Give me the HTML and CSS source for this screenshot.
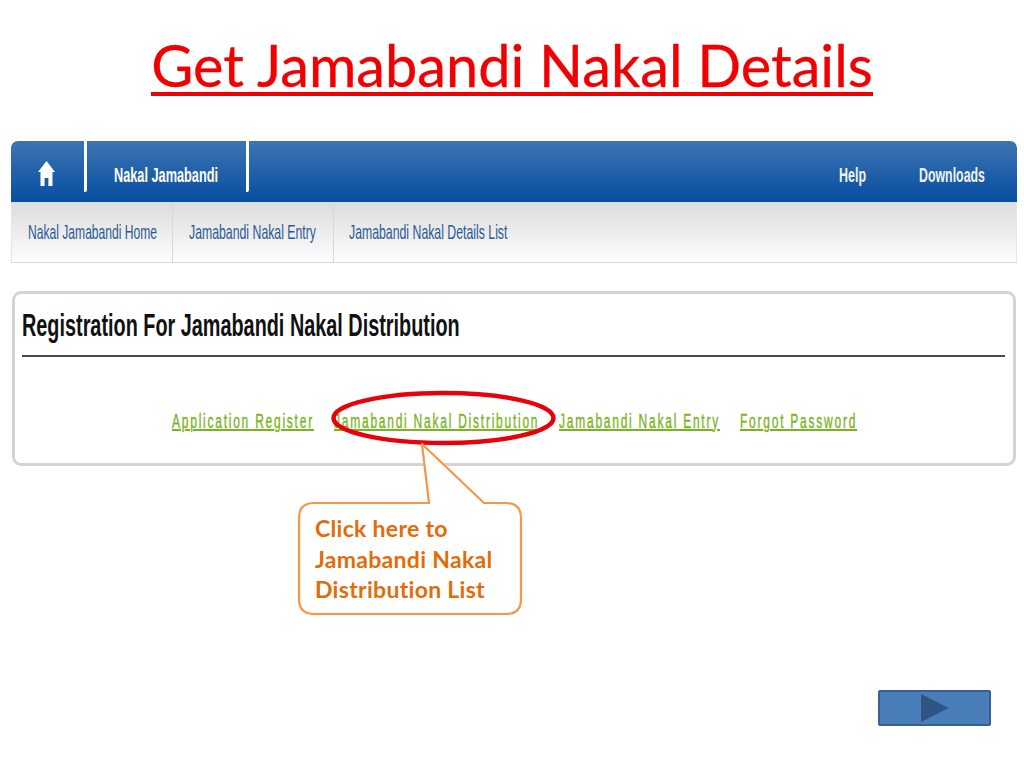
FILE: index.html
```html
<!DOCTYPE html>
<html lang="en">
<head>
<meta charset="utf-8">
<title>Get Jamabandi Nakal Details</title>
<link rel="stylesheet" href="styles.css">
</head>
<body>
<main class="slide">
  <h1 class="title"><span>Get Jamabandi Nakal Details</span></h1>
  <nav class="nav">
    <div class="mainbar">
      <a class="tab tab-home" aria-label="Home">
        <svg class="home" viewBox="0 0 17 25" width="17" height="25"><path d="M8.5 0 L17 11 L14.5 11 L14.5 25 L10.4 25 L10.4 17 L6.6 17 L6.6 25 L2.5 25 L2.5 11 L0 11 Z" fill="#fff"/></svg>
      </a>
      <a class="tab tab-nakal"><span class="sq">Nakal Jamabandi</span></a>
      <div class="spacer"></div>
      <a class="right help"><span class="sq">Help</span></a>
      <a class="right downloads"><span class="sq">Downloads</span></a>
    </div>
    <div class="subbar">
      <a class="sub sub1"><span class="sq">Nakal Jamabandi Home</span></a>
      <a class="sub sub2"><span class="sq">Jamabandi Nakal Entry</span></a>
      <a class="sub sub3"><span class="sq">Jamabandi Nakal Details List</span></a>
    </div>
  </nav>
  <section class="panel">
    <h2 class="panel-title"><span class="sq">Registration For Jamabandi Nakal Distribution</span></h2>
    <div class="links">
      <a class="l1"><span class="sq">Application Register</span></a>
      <a class="l2"><span class="sq">Jamabandi Nakal Distribution</span></a>
      <a class="l3"><span class="sq">Jamabandi Nakal Entry</span></a>
      <a class="l4"><span class="sq">Forgot Password</span></a>
    </div>
  </section>
  <svg class="annot" width="1024" height="768" viewBox="0 0 1024 768" aria-hidden="true">
    <ellipse cx="443.500" cy="418" rx="110" ry="25" fill="none" stroke="#e8000b" stroke-width="4.500"/>
    <path d="M422 444 L429 503 L314 503 Q299 503 299 518 L299 599 Q299 614 314 614 L506 614 Q521 614 521 599 L521 518 Q521 503 506 503 L484 503 Z" fill="#fff" stroke="#f79646" stroke-width="2.200" stroke-linejoin="round"/>
  </svg>
  <p class="callout">Click here to<br>Jamabandi Nakal<br>Distribution List</p>
  <div class="next"><div class="arrow"></div></div>
</main>
</body>
</html>
```
FILE: styles.css
```css
* { box-sizing: border-box; }
html, body { margin: 0; padding: 0; background: #fff; }
.slide { position: relative; width: 1024px; height: 768px; overflow: hidden; padding-top: 33px; }
.title { margin: 0; height: 108px; text-align: center; font: 400 57.7px/1 Lato, "Open Sans", sans-serif; color: #f00000; font-variant-ligatures: none; -webkit-text-stroke: .3px #f00000; }
.title span { display: inline-block; border-bottom: 4px solid #f00000; height: 63px; line-height: 64px; }
.sq { display: inline-block; white-space: nowrap; transform-origin: 0 50%; transform: scaleX(.6); }
.nav { margin: 0 7px 0 11px; }
.mainbar { display: flex; height: 61px; border-radius: 7px 7px 0 0; background: linear-gradient(#3d75b3, #064da0); }
.tab { display: flex; align-items: center; margin-bottom: 10px; border-right: 3px solid #fff; border-radius: 0 0 2px 0; color: #fff; font: 700 21px/1 "Liberation Sans", sans-serif; }
.tab-home { width: 76px; justify-content: flex-start; padding: 13px 0 0 27px; }
.home { display: block; }
.tab-nakal { width: 162px; padding: 16px 0 0 27px; }
.tab-nakal .sq { transform: scaleX(.606); }
.spacer { flex: 1; }
.right { width: 66px; color: #eef3fa; font: 700 21px/1 "Liberation Sans", sans-serif; padding-top: 23px; }
.help { width: 27px; margin-right: 53px; }
.help .sq { transform: scaleX(.593); }
.downloads { margin-right: 32px; }
.downloads .sq { transform: scaleX(.589); }
.subbar { display: flex; height: 61px; background: linear-gradient(#dcdcdc, #fdfdfd); border-bottom: 1px solid #d8d8d8; border-left: 1px solid #e4e4e4; border-right: 1px solid #e4e4e4; }
.sub { display: flex; align-items: center; padding: 0 0 1px 16px; color: #2a5a94; font: 400 21px/1 "Liberation Sans", sans-serif; border-right: 1px solid #d8d8d8; }
.sub1 { width: 161px; }
.sub2 { width: 161px; }
.sub3 { width: 176px; border-right: 0; padding-left: 15px; }
.sub1 .sq { transform: scaleX(.576); }
.sub2 .sq { transform: scaleX(.585); }
.sub3 .sq { transform: scaleX(.585); }
.panel { height: 175px; margin: 28px 8px 0 12px; border: 3px solid #d4d4d4; border-radius: 9px; padding: 0 8px 0 7px; background: #fff; }
.panel-title { margin: 0; height: 63px; border-bottom: 2px solid #4a4a4a; font: 700 31px/64px "Liberation Sans", sans-serif; color: #111; }
.panel-title .sq { transform: scaleX(.64); }
.links { display: flex; justify-content: center; gap: 20px; padding: 54px 0 0; font: 400 20px/20px "Liberation Sans", sans-serif; letter-spacing: 2.93px; color: #7ab51d; -webkit-text-stroke: .4px #7ab51d; }
.links a { display: block; }
.links .sq { text-decoration: underline; }
.l1 { width: 142px; }
.l2 { width: 205px; }
.l3 { width: 161px; }
.l4 { width: 116px; }
.annot { position: absolute; left: 0; top: 0; pointer-events: none; }
.callout { position: absolute; left: 315px; top: 513px; margin: 0; font: 700 23px/30.5px Lato, "Open Sans", sans-serif; letter-spacing: .3px; color: #e36c0a; font-variant-ligatures: none; }
.next { position: absolute; left: 878px; top: 690px; width: 113px; height: 36px; display: flex; align-items: center; justify-content: center; background: #4a7ebb; border: 2px solid #3a5f91; border-radius: 2px; }
.arrow { width: 0; height: 0; border-left: 28px solid #2f5584; border-top: 14px solid transparent; border-bottom: 14px solid transparent; }
```
